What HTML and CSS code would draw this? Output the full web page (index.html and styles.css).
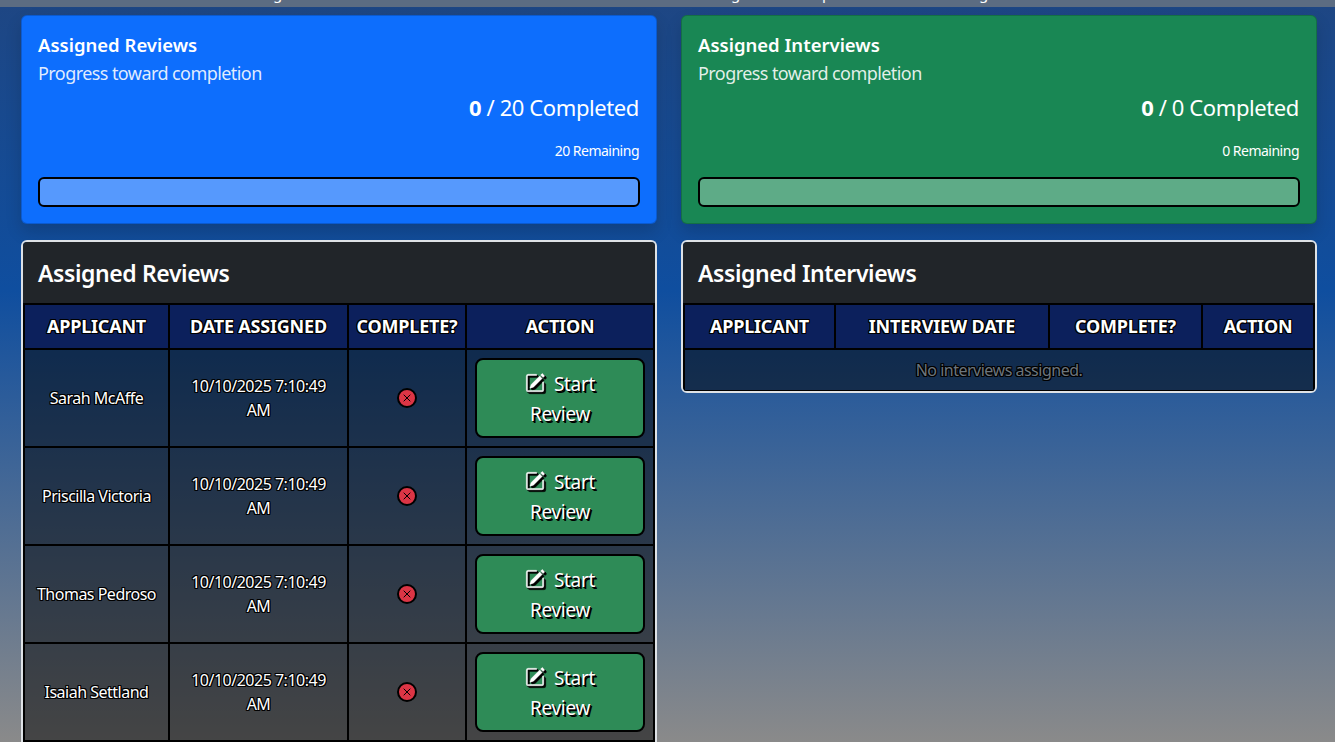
FILE: index.html
```
<!DOCTYPE html>
<html lang="en">
<head>
<meta charset="utf-8">
<title>Assignments</title>
<link rel="stylesheet" href="styles.css">
</head>
<body>
<svg width="0" height="0" class="sprite" aria-hidden="true">
  <symbol id="pencil" viewBox="0 0 16 16">
    <path d="M15.502 1.94a.5.5 0 0 1 0 .706L14.459 3.69l-2-2L13.502.646a.5.5 0 0 1 .707 0l1.293 1.293zm-1.75 2.456-2-2L4.939 9.21a.5.5 0 0 0-.121.196l-.805 2.414a.25.25 0 0 0 .316.316l2.414-.805a.5.5 0 0 0 .196-.12l6.813-6.814z"/>
    <path fill-rule="evenodd" d="M1 13.5A1.5 1.5 0 0 0 2.500 15h11a1.500 1.500 0 0 0 1.500-1.500v-6a.5.5 0 0 0-1 0v6a.5.5 0 0 1-.5.5h-11a.5.5 0 0 1-.5-.5v-11a.5.5 0 0 1 .5-.5H9a.5.5 0 0 0 0-1H2.500A1.500 1.500 0 0 0 1 2.500z"/>
  </symbol>
  <symbol id="cross" viewBox="0 0 16 16">
    <path d="M4.700 4.700l6.600 6.600M11.300 4.700l-6.600 6.600" fill="none" stroke="#000" stroke-width="1"/>
  </symbol>
</svg>
<nav class="topbar"><span>g</span><span>g</span><span>p</span><span>g</span></nav>
<main class="grid">
  <section class="stat stat-blue">
    <h5 class="stat-title">Assigned Reviews</h5>
    <p class="stat-sub">Progress toward completion</p>
    <p class="stat-count"><b>0</b> / 20 Completed</p>
    <p class="stat-left">20 Remaining</p>
    <div class="bar"></div>
  </section>
  <section class="stat stat-green">
    <h5 class="stat-title">Assigned Interviews</h5>
    <p class="stat-sub">Progress toward completion</p>
    <p class="stat-count"><b>0</b> / 0 Completed</p>
    <p class="stat-left">0 Remaining</p>
    <div class="bar"></div>
  </section>
  <section class="panel panel-long">
    <h4 class="panel-head">Assigned Reviews</h4>
    <table class="table">
      <colgroup><col class="r1"><col class="r2"><col class="r3"><col class="r4"></colgroup>
      <thead><tr><th>APPLICANT</th><th>DATE ASSIGNED</th><th>COMPLETE?</th><th>ACTION</th></tr></thead>
      <tbody>
        <tr><td>Sarah McAffe</td><td class="date">10/10/2025 7:10:49<br>AM</td><td><span class="badge"><svg><use href="#cross"/></svg></span></td><td class="act"><a class="btn"><svg class="ico"><use href="#pencil"/></svg>Start<br>Review</a></td></tr>
        <tr><td>Priscilla Victoria</td><td class="date">10/10/2025 7:10:49<br>AM</td><td><span class="badge"><svg><use href="#cross"/></svg></span></td><td class="act"><a class="btn"><svg class="ico"><use href="#pencil"/></svg>Start<br>Review</a></td></tr>
        <tr><td>Thomas Pedroso</td><td class="date">10/10/2025 7:10:49<br>AM</td><td><span class="badge"><svg><use href="#cross"/></svg></span></td><td class="act"><a class="btn"><svg class="ico"><use href="#pencil"/></svg>Start<br>Review</a></td></tr>
        <tr><td>Isaiah Settland</td><td class="date">10/10/2025 7:10:49<br>AM</td><td><span class="badge"><svg><use href="#cross"/></svg></span></td><td class="act"><a class="btn"><svg class="ico"><use href="#pencil"/></svg>Start<br>Review</a></td></tr>
      </tbody>
    </table>
  </section>
  <section class="panel panel-short">
    <h4 class="panel-head">Assigned Interviews</h4>
    <table class="table">
      <colgroup><col class="i1"><col class="i2"><col class="i3"><col class="i4"></colgroup>
      <thead><tr><th>APPLICANT</th><th>INTERVIEW DATE</th><th>COMPLETE?</th><th>ACTION</th></tr></thead>
      <tbody><tr class="empty"><td colspan="4">No interviews assigned.</td></tr></tbody>
    </table>
  </section>
</main>
</body>
</html>
```
FILE: styles.css
```
* { box-sizing: border-box; }
html, body { height: 742px; overflow: hidden; }
body {
  margin: 0;
  font: 16px/24px "Segoe UI", "Noto Sans", "Open Sans", sans-serif;
  color: #fff;
  background: linear-gradient(#1e4683 0, #0f4e9f 290px, #8a8a8a 742px);
}
.sprite { position: absolute; }
h4, h5, p { margin: 0; }

.topbar {
  height: 7px;
  overflow: hidden;
  background: #5c6c82;
  display: grid;
  grid-template-columns: 458px 91px 157px 1fr;
  padding-left: 273px;
  font-size: 15px;
  line-height: 15px;
}
.topbar span { margin-top: -14px; }

.grid {
  display: grid;
  grid-template-columns: 636px 636px;
  column-gap: 24px;
  row-gap: 16px;
  padding: 8px 0 0 21px;
  align-items: start;
}

.stat {
  height: 209px;
  padding: 15px 16px;
  border: 1px solid rgba(0, 0, 0, .176);
  border-radius: 6px;
  box-shadow: 0 8px 16px rgba(0, 0, 0, .15);
}
.stat-blue { background: #0d6efd; }
.stat-green { background: #198754; }
.stat-title { font-size: 18.5px; line-height: 28px; font-weight: 600; letter-spacing: 0; }
.stat-sub { font-size: 18px; line-height: 29px; letter-spacing: -.57px; color: rgba(255, 255, 255, .88); }
.stat-count { margin-top: 3px; padding-right: 1px; font-size: 22px; line-height: 33px; text-align: right; letter-spacing: -.4px; }
.stat-left { margin-top: 17px; padding-right: 1px; font-size: 14px; line-height: 20px; text-align: right; letter-spacing: -.5px; }
.bar {
  height: 30px;
  margin-top: 16px;
  border: 2px solid #000;
  border-radius: 6px;
  background: rgba(255, 255, 255, .3);
}

.panel {
  border: 2px solid #dee2e6;
  border-radius: 6px;
  overflow: hidden;
}
.panel-long { border-bottom: 0; border-radius: 6px 6px 0 0; }
.panel-short { height: 153px; }
.panel-head {
  height: 61px;
  padding: 0 15px;
  background: #212529;
  font-size: 23px;
  line-height: 63px;
  font-weight: 600;
  letter-spacing: -.4px;
}
.table {
  width: 632px;
  table-layout: fixed;
  border-collapse: collapse;
  text-align: center;
  text-shadow: -1px -1px 0 #000, 1px -1px 0 #000, -1px 1px 0 #000, 1px 1px 0 #000, 0 1px 0 #000, 0 -1px 0 #000, 1px 0 0 #000, -1px 0 0 #000;
}
.r1 { width: 145px; } .r2 { width: 179px; } .r3 { width: 118px; } .r4 { width: 188px; }
.i1 { width: 151px; } .i2 { width: 214px; } .i3 { width: 153px; } .i4 { width: 112px; }
th, td { border: 2px solid #000; padding: 0; vertical-align: middle; }
th { height: 45px; padding-bottom: 2px; background: #0c205c; font-size: 18px; font-weight: 700; letter-spacing: -.2px; white-space: nowrap; }
td { height: 98px; background: rgba(0, 0, 0, .5); font-size: 16px; letter-spacing: -.5px; white-space: nowrap; }
.empty td { height: 42px; color: #6c757d; letter-spacing: -.5px; }
.act { padding: 0 8px; }
.badge {
  display: block;
  width: 20px;
  height: 20px;
  margin: 0 auto;
  border: 2px solid #000;
  border-radius: 50%;
  background: #dc3545;
}
.badge svg { display: block; width: 16px; height: 16px; }
.btn {
  display: block;
  height: 80px;
  padding: 9px 8px 7px;
  border: 2px solid #000;
  border-radius: 8px;
  background: #2e8b57;
  font-size: 19px;
  line-height: 30px;
  letter-spacing: -.3px;
  text-shadow: 1px 1px 0 #000, 2px 2px 0 #000;
}
.ico {
  width: 20px;
  height: 20px;
  margin-right: 9px;
  vertical-align: -2px;
  fill: #fff;
  stroke: #fff;
  stroke-width: .3;
  filter: drop-shadow(1px 1px 0 #000) drop-shadow(1px 1px 0 #000);
}
```
